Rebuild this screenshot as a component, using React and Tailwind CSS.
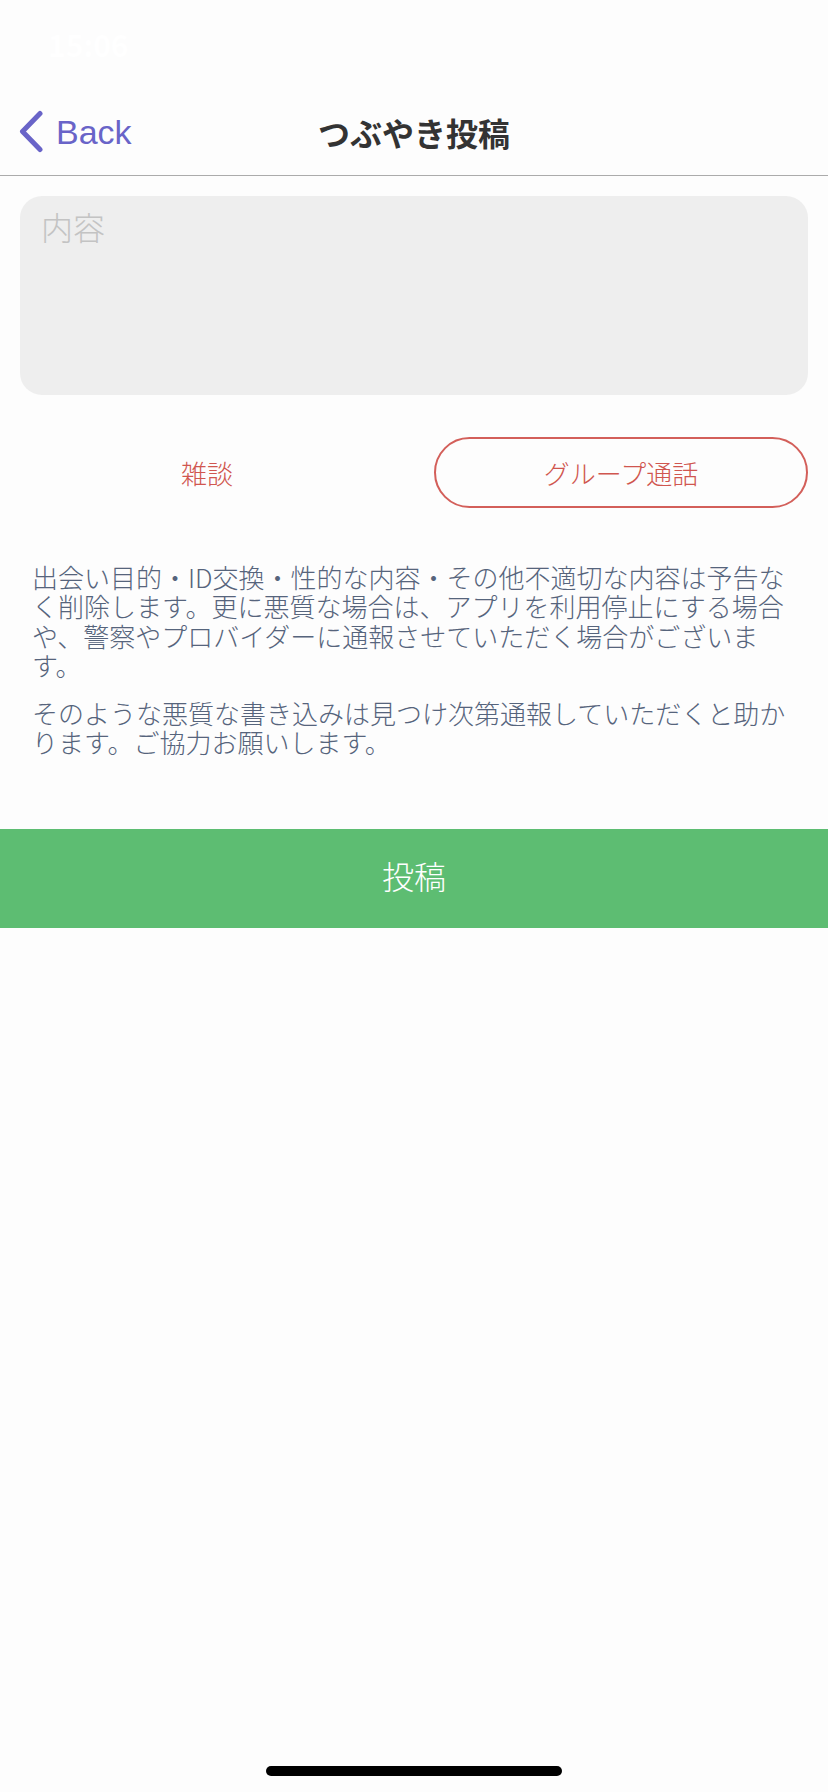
import { useState } from 'react';

const JP = { fontFamily: '"Noto Sans CJK JP", "Noto Sans", sans-serif' };

function BackChevron() {
  return (
    <svg width="26" height="43" viewBox="0 0 26 43" fill="none">
      <path d="M22 3.5 L4.5 21.5 L22 39.5" stroke="#6964c8" strokeWidth="5" strokeLinecap="round" strokeLinejoin="round" />
    </svg>
  );
}

export default function App() {
  const [tab, setTab] = useState('group');
  const [text, setText] = useState('');

  return (
    <div lang="ja" className="relative w-[828px] min-h-[1792px] bg-[#fdfdfd] flex flex-col" style={JP}>
      {/* status bar (white on white in the capture) */}
      <div className="h-[88px] flex items-center justify-between px-[48px] text-white text-[30px] font-semibold">
        <span>15:06</span>
        <span />
      </div>

      {/* nav bar */}
      <div className="h-[88px] grid grid-cols-[1fr_auto_1fr] items-center border-b border-[#ababab]">
        <button className="flex items-center gap-[12px] pl-[18px] text-[#6964c8]">
          <BackChevron />
          <span className="text-[34px] leading-none" style={{ fontFamily: '"Liberation Sans", Arial, sans-serif' }}>Back</span>
        </button>
        <h1 className="text-[32px] font-bold text-[#333333] leading-none">つぶやき投稿</h1>
        <div />
      </div>

      <div className="px-5">
        {/* content box */}
        <div className="mt-[20px] h-[199px] rounded-[22px] bg-[#eeeeee] px-[21px] pt-[8px]">
          <textarea
            value={text}
            onChange={(e) => setText(e.target.value)}
            placeholder="内容"
            className="w-full h-full bg-transparent resize-none outline-none text-[32px] font-light leading-[44px] text-[#333] placeholder:text-[#c3c3c3]"
            style={JP}
          />
        </div>

        {/* category toggle */}
        <div className="mt-[42px] grid grid-cols-2 gap-10 h-[71px]">
          <button
            onClick={() => setTab('chat')}
            className={`flex items-center justify-center rounded-full text-[26px] font-light text-[#d0564f] ${tab === 'chat' ? 'border-2 border-[#d35f5a]' : ''}`}
          >
            雑談
          </button>
          <button
            onClick={() => setTab('group')}
            className={`flex items-center justify-center rounded-full text-[26px] font-light text-[#d0564f] ${tab === 'group' ? 'border-2 border-[#d35f5a]' : ''}`}
          >
            グループ通話
          </button>
        </div>

        {/* notice */}
        <div className="mt-[54px] px-3 text-[26px] font-light leading-[29.3px] text-[#56647c]">
          <p>出会い目的・ID交換・性的な内容・その他不適切な内容は予告なく削除します。更に悪質な場合は、アプリを利用停止にする場合や、警察やプロバイダーに通報させていただく場合がございます。</p>
          <p className="mt-[19px]">そのような悪質な書き込みは見つけ次第通報していただくと助かります。ご協力お願いします。</p>
        </div>
      </div>

      <button className="mt-[72px] h-[99px] pb-[6px] w-full bg-[#5dbd72] text-white text-[32px] font-light flex items-center justify-center">
        投稿
      </button>

      {/* home indicator */}
      <div className="absolute bottom-[16px] left-[266px] w-[296px] h-[10px] rounded-full bg-black" />
    </div>
  );
}
